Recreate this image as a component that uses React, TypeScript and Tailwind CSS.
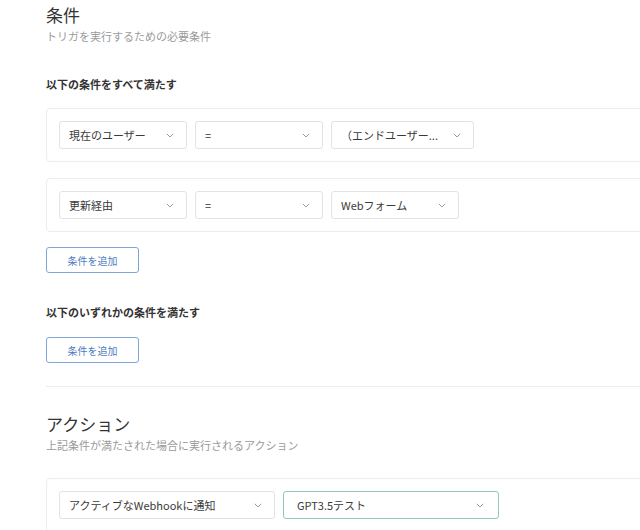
import React from "react";

const font = { fontFamily: '"Noto Sans CJK JP", "Noto Sans", sans-serif' };

function Chevron() {
  return (
    <svg width="8" height="5" viewBox="0 0 8 5" fill="none" className="shrink-0">
      <path d="M0.8 0.8L4 4L7.2 0.8" stroke="#9a9a9a" strokeWidth="1" />
    </svg>
  );
}

function Select({ label, width, green = false, px = "pl-[9px] pr-[12px]" }: { label: string; width: string; green?: boolean; px?: string }) {
  return (
    <div
      className={`flex h-[28px] items-center justify-between rounded-[3px] border bg-white text-[11px] text-[#3a3a3a] ${px} ${width} ${
        green ? "border-[#8ecbb2]" : "border-[#e3e3e3]"
      }`}
    >
      <span className="truncate">{label}</span>
      <Chevron />
    </div>
  );
}

function ConditionRow({ items }: { items: { label: string; width: string }[] }) {
  return (
    <div className="flex gap-[8px] rounded-[4px] border border-[#ececec] bg-white p-[12px]">
      {items.map((it, i) => (
        <Select key={i} label={it.label} width={it.width} />
      ))}
    </div>
  );
}

function AddButton() {
  return (
    <button className="flex h-[26px] w-[93px] items-center justify-center rounded-[3px] border border-[#7fa6d8] bg-white text-[10px] text-[#4d7cc0]">
      条件を追加
    </button>
  );
}

export default function App() {
  return (
    <div className="h-[530px] w-[640px] overflow-hidden bg-white" style={font}>
      <div className="w-[720px] pl-[46px] pt-[3px]">
        {/* 条件 */}
        <h2 className="text-[17px] leading-[24px] text-[#333]">条件</h2>
        <p className="text-[11px] leading-[18px] text-[#9b9b9b]">トリガを実行するための必要条件</p>

        <h3 className="mt-[30px] text-[11px] font-bold leading-[18px] text-[#333]">以下の条件をすべて満たす</h3>

        <div className="mt-[15px]">
          <ConditionRow
            items={[
              { label: "現在のユーザー", width: "w-[128px]" },
              { label: "=", width: "w-[128px]" },
              { label: "（エンドユーザー...", width: "w-[143px]" },
            ]}
          />
        </div>
        <div className="mt-[16px]">
          <ConditionRow
            items={[
              { label: "更新経由", width: "w-[128px]" },
              { label: "=", width: "w-[128px]" },
              { label: "Webフォーム", width: "w-[128px]" },
            ]}
          />
        </div>

        <div className="mt-[15px]">
          <AddButton />
        </div>

        <h3 className="mt-[30px] text-[11px] font-bold leading-[18px] text-[#333]">以下のいずれかの条件を満たす</h3>
        <div className="mt-[16px]">
          <AddButton />
        </div>

        <div className="mt-[23px] border-t border-[#ececec]" />

        {/* アクション */}
        <h2 className="mt-[25px] text-[17px] leading-[24px] text-[#333]">アクション</h2>
        <p className="text-[11px] leading-[18px] text-[#9b9b9b]">上記条件が満たされた場合に実行されるアクション</p>

        <div className="mt-[24px] flex gap-[8px] rounded-[4px] border border-[#ececec] bg-white p-[12px] pb-[40px]">
          <Select label="アクティブなWebhookに通知" width="w-[216px]" />
          <Select label="GPT3.5テスト" width="w-[216px]" green px="pl-[13px] pr-[14px]" />
        </div>
      </div>
    </div>
  );
}
